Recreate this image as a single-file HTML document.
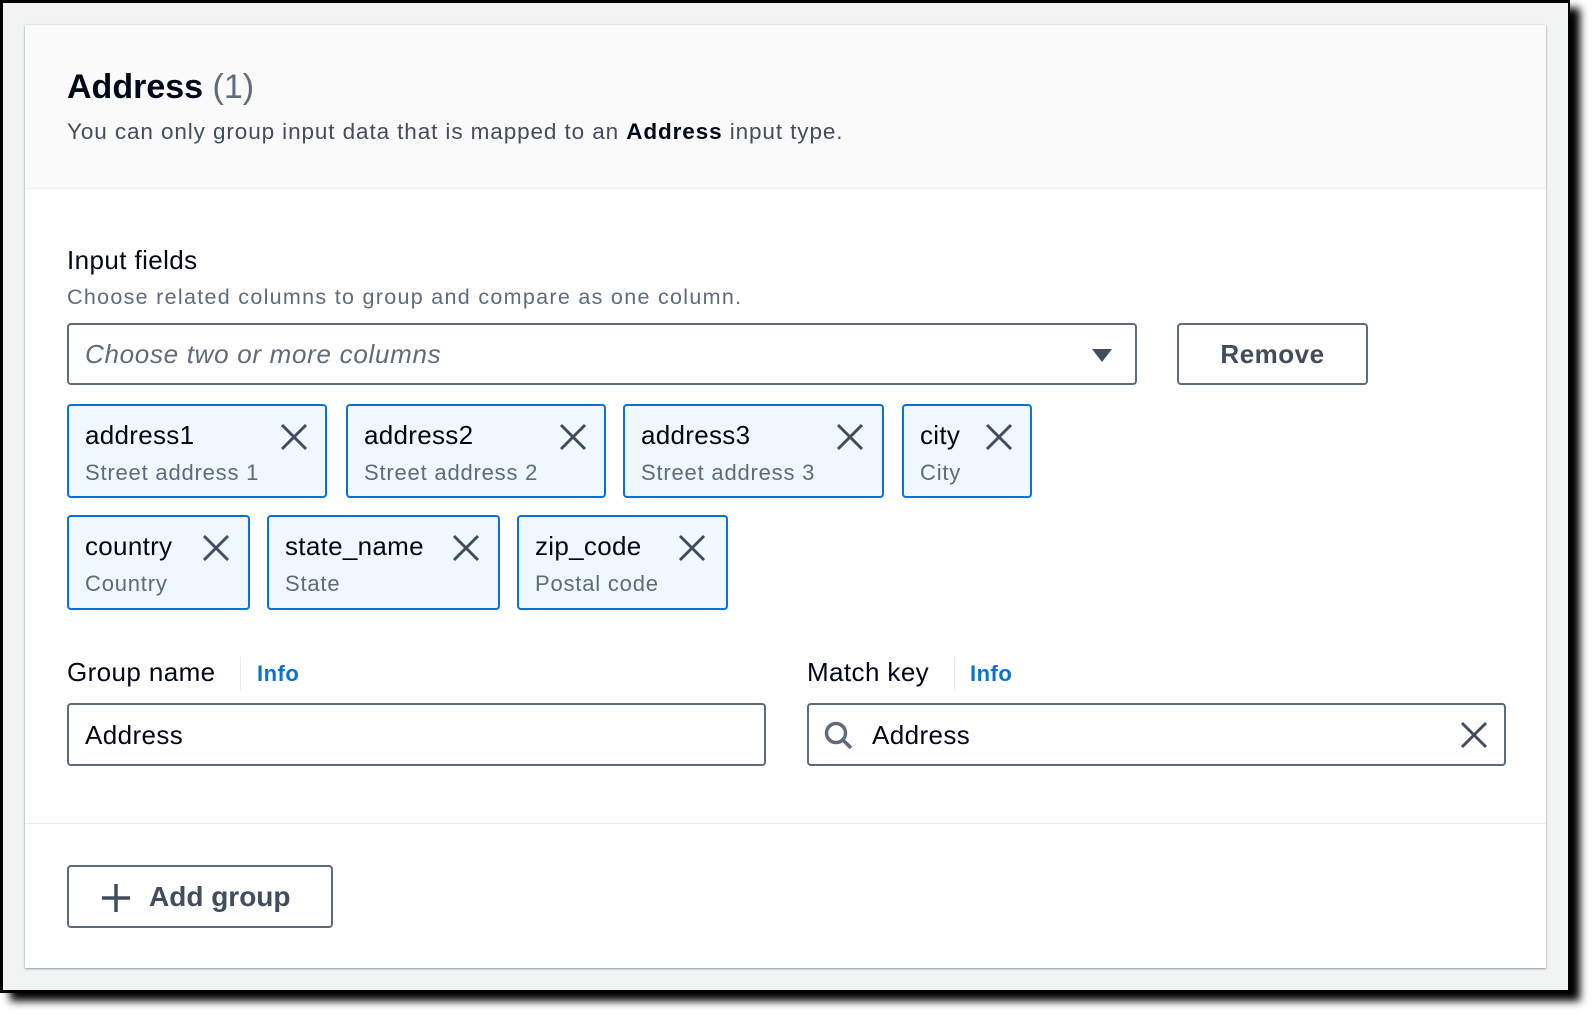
<!DOCTYPE html>
<html><head><meta charset="utf-8"><style>
*{box-sizing:border-box;margin:0;padding:0}
body{width:1592px;height:1014px;background:#fff;position:relative;overflow:hidden;font-family:"Liberation Sans",sans-serif}
.frame{position:absolute;left:0;top:0;width:1570px;height:993px;background:#000;box-shadow:10px 8px 8px #000}
.gray{position:absolute;left:3px;top:3px;width:1565px;height:987px;background:#f2f3f3}
.card{position:absolute;left:25px;top:25px;width:1521px;height:943px;background:#fff;box-shadow:0 1px 2px #8a98a3,0 0 1px #c6ccd1}
.hdr{position:absolute;left:0;top:0;width:100%;height:164px;background:#fafafa;border-bottom:1px solid #e9ebed}
.abs{position:absolute;white-space:nowrap}
.box{position:absolute;border:2px solid #5f6b7a;border-radius:4px;background:#fff}
.tok{position:absolute;border:2px solid #0972d3;border-radius:4px;background:#f0f8ff}
.tok .a{position:absolute;left:16px;top:14px;font-size:26px;color:#000716;letter-spacing:0.3px}
.tok .b{position:absolute;left:16px;top:54px;font-size:22px;color:#5f6b7a;letter-spacing:0.8px}
.tok svg{position:absolute;top:16px}
.lbl{font-size:26px;color:#000716;letter-spacing:0.4px}
.info{font-size:22px;color:#0972d3;font-weight:bold;letter-spacing:0.5px}
.sep{position:absolute;width:1px;height:34px;background:#e9ebed}
</style></head><body>
<div class="frame"></div><div class="gray"></div>
<div class="card">
<div class="hdr"></div>
<div class="abs" style="left:42px;top:43px;font-size:34px;font-weight:bold;color:#000716">Address <span style="font-weight:normal;color:#5f6b7a">(1)</span></div>
<div class="abs" style="left:42px;top:94px;font-size:22.5px;color:#414d5c;letter-spacing:0.9px">You can only group input data that is mapped to an <b style="color:#000716">Address</b> input type.</div>
<div class="abs lbl" style="left:42px;top:220px">Input fields</div>
<div class="abs" style="left:42px;top:260px;font-size:21.5px;color:#5f6b7a;letter-spacing:1.3px">Choose related columns to group and compare as one column.</div>
<div class="box" style="left:42px;top:298px;width:1070px;height:62px"><div class="abs" style="left:16px;top:14px;font-size:26px;font-style:italic;color:#5f6b7a;letter-spacing:0.7px">Choose two or more columns</div>
<svg class="abs" style="left:1021px;top:22px" width="24" height="16"><path d="M2 2H22L12 15Z" fill="#414d5c"/></svg></div>
<div class="box" style="left:1152px;top:298px;width:191px;height:62px;text-align:center;line-height:58px;font-size:26px;font-weight:bold;color:#414d5c;letter-spacing:0.5px">Remove</div>

<div class="tok" style="left:42px;top:379px;width:260px;height:94px"><div class="a">address1</div><div class="b">Street address 1</div><svg style="left:210px" width="30" height="30"><path d="M3 3L27 27M27 3L3 27" stroke="#414d5c" stroke-width="3"/></svg></div>
<div class="tok" style="left:321px;top:379px;width:260px;height:94px"><div class="a">address2</div><div class="b">Street address 2</div><svg style="left:210px" width="30" height="30"><path d="M3 3L27 27M27 3L3 27" stroke="#414d5c" stroke-width="3"/></svg></div>
<div class="tok" style="left:598px;top:379px;width:261px;height:94px"><div class="a">address3</div><div class="b">Street address 3</div><svg style="left:210px" width="30" height="30"><path d="M3 3L27 27M27 3L3 27" stroke="#414d5c" stroke-width="3"/></svg></div>
<div class="tok" style="left:877px;top:379px;width:130px;height:94px"><div class="a">city</div><div class="b">City</div><svg style="left:80px" width="30" height="30"><path d="M3 3L27 27M27 3L3 27" stroke="#414d5c" stroke-width="3"/></svg></div>

<div class="tok" style="left:42px;top:490px;width:183px;height:95px"><div class="a">country</div><div class="b">Country</div><svg style="left:132px" width="30" height="30"><path d="M3 3L27 27M27 3L3 27" stroke="#414d5c" stroke-width="3"/></svg></div>
<div class="tok" style="left:242px;top:490px;width:233px;height:95px"><div class="a">state_name</div><div class="b">State</div><svg style="left:182px" width="30" height="30"><path d="M3 3L27 27M27 3L3 27" stroke="#414d5c" stroke-width="3"/></svg></div>
<div class="tok" style="left:492px;top:490px;width:211px;height:95px"><div class="a">zip_code</div><div class="b">Postal code</div><svg style="left:158px" width="30" height="30"><path d="M3 3L27 27M27 3L3 27" stroke="#414d5c" stroke-width="3"/></svg></div>

<div class="abs lbl" style="left:42px;top:632px">Group name</div>
<div class="sep" style="left:215px;top:632px"></div>
<div class="abs info" style="left:232px;top:636px">Info</div>
<div class="box" style="left:42px;top:678px;width:699px;height:63px"><div class="abs" style="left:16px;top:15px;font-size:26px;color:#000716;letter-spacing:0.4px">Address</div></div>

<div class="abs lbl" style="left:782px;top:632px">Match key</div>
<div class="sep" style="left:929px;top:632px"></div>
<div class="abs info" style="left:945px;top:636px">Info</div>
<div class="box" style="left:782px;top:678px;width:699px;height:63px">
<svg class="abs" style="left:14px;top:15px" width="32" height="32"><circle cx="13" cy="13" r="9.5" fill="none" stroke="#5f6b7a" stroke-width="3.5"/><path d="M20 20L28 28" stroke="#5f6b7a" stroke-width="3.5"/></svg>
<div class="abs" style="left:63px;top:15px;font-size:26px;color:#000716;letter-spacing:0.4px">Address</div>
<svg class="abs" style="left:650px;top:15px" width="30" height="30"><path d="M3 3L27 27M27 3L3 27" stroke="#414d5c" stroke-width="3"/></svg></div>

<div class="abs" style="left:0;top:798px;width:100%;height:1px;background:#e9ebed"></div>
<div class="box" style="left:42px;top:840px;width:266px;height:63px">
<svg class="abs" style="left:32px;top:16px" width="30" height="30"><path d="M15 1V29M1 15H29" stroke="#414d5c" stroke-width="3.5"/></svg>
<div class="abs" style="left:80px;top:14px;font-size:28px;font-weight:bold;color:#414d5c">Add group</div></div>
</div>
</body></html>
